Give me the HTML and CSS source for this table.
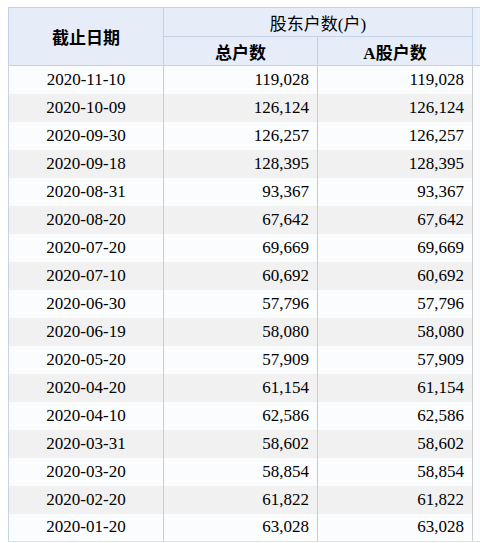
FILE: index.html
```html
<!DOCTYPE html>
<html lang="zh-CN">
<head>
<meta charset="utf-8">
<title>股东户数</title>
<link rel="stylesheet" href="styles.css">
</head>
<body>
<table class="holders">
  <colgroup>
    <col class="c-date">
    <col class="c-num">
    <col class="c-num2">
    <col class="c-extra">
  </colgroup>
  <thead>
    <tr class="hrow">
      <th rowspan="2" class="bold">截止日期</th>
      <th colspan="2" class="group">股东户数(户)</th>
      <th rowspan="2" class="extra"></th>
    </tr>
    <tr class="hrow">
      <th class="bold">总户数</th>
      <th class="bold">A股户数</th>
    </tr>
  </thead>
  <tbody>
    <tr><td class="date">2020-11-10</td><td class="num">119,028</td><td class="num">119,028</td><td class="extra"></td></tr>
    <tr><td class="date">2020-10-09</td><td class="num">126,124</td><td class="num">126,124</td><td class="extra"></td></tr>
    <tr><td class="date">2020-09-30</td><td class="num">126,257</td><td class="num">126,257</td><td class="extra"></td></tr>
    <tr><td class="date">2020-09-18</td><td class="num">128,395</td><td class="num">128,395</td><td class="extra"></td></tr>
    <tr><td class="date">2020-08-31</td><td class="num">93,367</td><td class="num">93,367</td><td class="extra"></td></tr>
    <tr><td class="date">2020-08-20</td><td class="num">67,642</td><td class="num">67,642</td><td class="extra"></td></tr>
    <tr><td class="date">2020-07-20</td><td class="num">69,669</td><td class="num">69,669</td><td class="extra"></td></tr>
    <tr><td class="date">2020-07-10</td><td class="num">60,692</td><td class="num">60,692</td><td class="extra"></td></tr>
    <tr><td class="date">2020-06-30</td><td class="num">57,796</td><td class="num">57,796</td><td class="extra"></td></tr>
    <tr><td class="date">2020-06-19</td><td class="num">58,080</td><td class="num">58,080</td><td class="extra"></td></tr>
    <tr><td class="date">2020-05-20</td><td class="num">57,909</td><td class="num">57,909</td><td class="extra"></td></tr>
    <tr><td class="date">2020-04-20</td><td class="num">61,154</td><td class="num">61,154</td><td class="extra"></td></tr>
    <tr><td class="date">2020-04-10</td><td class="num">62,586</td><td class="num">62,586</td><td class="extra"></td></tr>
    <tr><td class="date">2020-03-31</td><td class="num">58,602</td><td class="num">58,602</td><td class="extra"></td></tr>
    <tr><td class="date">2020-03-20</td><td class="num">58,854</td><td class="num">58,854</td><td class="extra"></td></tr>
    <tr><td class="date">2020-02-20</td><td class="num">61,822</td><td class="num">61,822</td><td class="extra"></td></tr>
    <tr><td class="date">2020-01-20</td><td class="num">63,028</td><td class="num">63,028</td><td class="extra"></td></tr>
  </tbody>
</table>
</body>
</html>
```
FILE: styles.css
```css
html, body {
  overflow: hidden;
}
body {
  margin: 7px 0 0 8px;
  background: #ffffff;
  font-family: "Liberation Serif", "Noto Sans CJK SC", serif;
  font-size: 17px;
  color: #000;
}
.holders {
  border-collapse: collapse;
  table-layout: fixed;
  width: 472px;
}
.c-date { width: 155px; }
.c-num { width: 154px; }
.c-num2 { width: 155px; }
.c-extra { width: 8px; }

.holders th {
  background: #e6edf8;
  border: 1px solid #c4d2e6;
  font-weight: normal;
  padding: 0;
  text-align: center;
}
.hrow {
  height: 29px;
}
.holders th.bold {
  font-weight: bold;
}
.holders th.extra {
  background: #eaf0f9;
  border-right: none;
}
.holders tbody tr {
  height: 28px;
  background: #fbfcfe;
}
.holders tbody tr:nth-child(even) {
  background: #f1f1f1;
}
.holders td {
  padding: 0 8px;
  border-left: 1px solid #cccccc;
  border-right: 1px solid #cccccc;
}
.holders td.date {
  text-align: center;
  border-left: 1px solid #c4d2e6;
}
.holders td.num {
  text-align: right;
}
.holders td.extra {
  padding: 0;
  background: #fbfcfe;
  border-right: none;
}
.holders tbody tr:last-child td {
  border-bottom: 1px solid #dde3ec;
}
```
